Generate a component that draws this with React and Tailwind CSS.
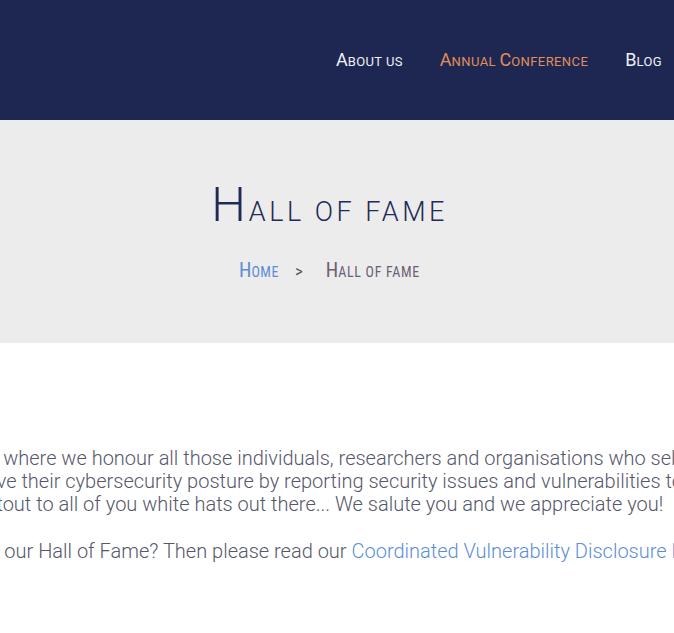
import React from "react";

const navItems = [
  { label: "About us", active: false },
  { label: "Annual Conference", active: true },
  { label: "Blog", active: false },
];

// Capitals stay full size, lowercase letters become small capitals
const SmallCaps = ({ text, big, small }) => (
  <>
    {text.match(/[A-Z]+|[^A-Z]+/g).map((part, i) =>
      /[A-Z]/.test(part[0]) ? (
        <span key={i} className={big}>
          {part}
        </span>
      ) : (
        <span key={i} className={`uppercase ${small}`}>
          {part}
        </span>
      )
    )}
  </>
);

const App = () => (
  <div className="w-full min-h-[633px] overflow-hidden bg-white font-['Roboto','Liberation_Sans',sans-serif]">
    {/* Header */}
    <header className="h-[120px] bg-[#1e2751] flex items-center justify-end pr-3">
      <nav className="flex items-baseline gap-[37px] pb-[1px]">
        {navItems.map((item) => (
          <a
            key={item.label}
            href="#"
            className={`leading-none ${item.active ? "text-[#e08e5b]" : "text-[#eef0f8]"}`}
          >
            <SmallCaps text={item.label} big="text-[18px]" small="text-[13px] tracking-[0.4px]" />
          </a>
        ))}
      </nav>
    </header>

    {/* Page title */}
    <section className="h-[223px] bg-[#ececec] flex flex-col items-center pt-[60px] pr-[15px]">
      <h1 className="leading-none font-light text-[#1f2a55]">
        <SmallCaps text="Hall of fame" big="text-[49px] tracking-[3px]" small="text-[27px] tracking-[3.5px]" />
      </h1>
      <div className="mt-[31px] flex items-baseline leading-none font-stretch-[87.5%]">
        <a href="#" className="text-[#5b8ed6]">
          <SmallCaps text="Home" big="text-[20px]" small="text-[14px] tracking-[0.5px]" />
        </a>
        <span className="ml-[16px] mr-[23px] text-[#555] text-[17px]">&gt;</span>
        <span className="text-[#6c5f78]">
          <SmallCaps text="Hall of fame" big="text-[20px]" small="text-[14px] tracking-[0.7px]" />
        </span>
      </div>
    </section>

    {/* Content */}
    <section className="flex justify-center pt-[104px]">
      <div className="w-[918px] shrink-0 text-[20px] leading-[23px] text-[#56576b] font-light whitespace-nowrap">
        <p>
          That's a place where we honour all those individuals, researchers and organisations who selflessly
          <br />
          help us improve their cybersecurity posture by reporting security issues and vulnerabilities to us.
          <br />
          So a big shoutout to all of you white hats out there... We salute you and we appreciate you!
        </p>
        <p className="mt-[24px]">
          Want to be on our Hall of Fame? Then please read our{" "}
          <a href="#" className="text-[#5b8ed6]">
            Coordinated Vulnerability Disclosure Policy
          </a>
          .
        </p>
      </div>
    </section>
  </div>
);

export default App;
